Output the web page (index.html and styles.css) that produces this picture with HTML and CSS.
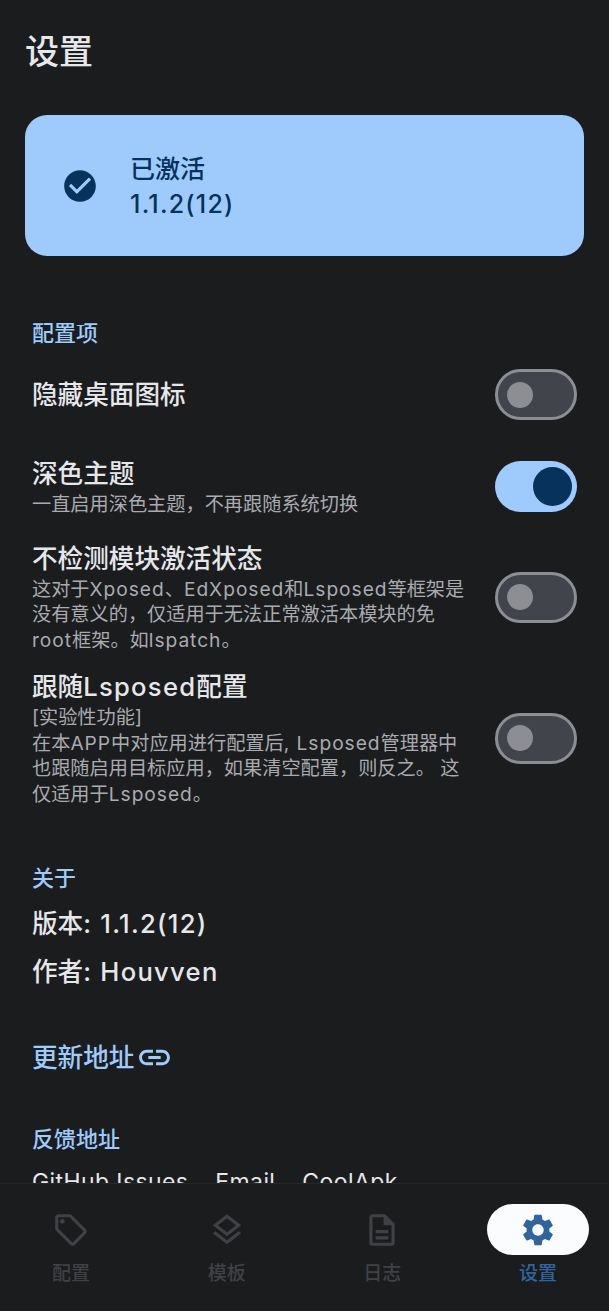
FILE: index.html
```html
<!DOCTYPE html>
<html lang="zh">
<head>
    <meta charset="UTF-8">
    <meta name="viewport" content="width=device-width, initial-scale=1.0">
    <title>设置</title>
    <link rel="stylesheet" href="styles.css">
</head>
<body>
    <div class="app">
        <main class="content">
            <h1 class="page-title">设置</h1>

            <!-- Status card -->
            <div class="status-card">
                <svg class="status-icon" viewBox="0 0 24 24"><path d="M12 2C6.48 2 2 6.48 2 12s4.48 10 10 10 10-4.48 10-10S17.52 2 12 2zm-2 15-5-5 1.41-1.41L10 14.17l7.59-7.59L19 8l-9 9z"/></svg>
                <div class="status-text">
                    <div>已激活</div>
                    <div class="lat">1.1.2(12)</div>
                </div>
            </div>

            <h2 class="section-title first">配置项</h2>

            <div class="setting one">
                <div class="setting-text"><div class="setting-name">隐藏桌面图标</div></div>
                <span class="switch"></span>
            </div>
            <div class="setting two">
                <div class="setting-text">
                    <div class="setting-name">深色主题</div>
                    <div class="setting-desc">一直启用深色主题，不再跟随系统切换</div>
                </div>
                <span class="switch on"></span>
            </div>
            <div class="setting three">
                <div class="setting-text">
                    <div class="setting-name">不检测模块激活状态</div>
                    <div class="setting-desc">这对于<span class="lat">Xposed</span>、<span class="lat">EdXposed</span>和<span class="lat">Lsposed</span>等框架是没有意义的，仅适用于无法正常激活本模块的免<span class="lat">root</span>框架。如<span class="lat">lspatch</span>。</div>
                </div>
                <span class="switch"></span>
            </div>
            <div class="setting four">
                <div class="setting-text">
                    <div class="setting-name">跟随<span class="lat">Lsposed</span>配置</div>
                    <div class="setting-desc">[实验性功能]<br>在本<span class="lat">APP</span>中对应用进行配置后<span class="lat">, Lsposed</span>管理器中也跟随启用目标应用，如果清空配置，则反之。 这仅适用于<span class="lat">Lsposed</span>。</div>
                </div>
                <span class="switch"></span>
            </div>

            <h2 class="section-title about">关于</h2>
            <div class="info-line">版本<span class="lat">: 1.1.2(12)</span></div>
            <div class="info-line">作者<span class="lat">: Houvven</span></div>

            <a class="update-link">更新地址
                <svg viewBox="0 0 24 24"><path d="M3.9 12c0-1.71 1.39-3.1 3.1-3.1h4V7H7c-2.76 0-5 2.24-5 5s2.24 5 5 5h4v-1.9H7c-1.71 0-3.1-1.39-3.1-3.1zM8 13h8v-2H8v2zm9-6h-4v1.9h4c1.71 0 3.1 1.39 3.1 3.1s-1.39 3.1-3.1 3.1h-4V17h4c2.76 0 5-2.24 5-5s-2.24-5-5-5z"/></svg>
            </a>

            <h2 class="section-title feedback">反馈地址</h2>
            <div class="feedback-links">
                <span>GitHub Issues</span>
                <span>Email</span>
                <span>CoolApk</span>
            </div>
        </main>

        <!-- Bottom navigation -->
        <nav class="bottom-nav">
            <div class="nav-item">
                <span class="nav-icon"><svg viewBox="0 0 24 24"><path d="m21.41 11.58-9-9C12.05 2.22 11.55 2 11 2H4c-1.1 0-2 .9-2 2v7c0 .55.22 1.05.59 1.42l9 9c.36.36.86.58 1.41.58s1.05-.22 1.41-.59l7-7c.37-.36.59-.86.59-1.41s-.23-1.06-.59-1.42zM13 20.01 4 11V4h7v-.01l9 9-7 7.02z"/><circle cx="6.5" cy="6.5" r="1.5"/></svg></span>
                <span class="nav-label">配置</span>
            </div>
            <div class="nav-item">
                <span class="nav-icon"><svg viewBox="0 0 24 24"><path d="m11.99 18.54-7.37-5.73L3 14.07l9 7 9-7-1.63-1.27zM12 16l7.36-5.73L21 9l-9-7-9 7 1.63 1.27L12 16zm0-11.47L17.74 9 12 13.47 6.26 9 12 4.53z"/></svg></span>
                <span class="nav-label">模板</span>
            </div>
            <div class="nav-item">
                <span class="nav-icon"><svg viewBox="0 0 24 24"><path d="M8 16h8v2H8zm0-4h8v2H8zm6-10H6c-1.1 0-2 .9-2 2v16c0 1.1.89 2 1.99 2H18c1.1 0 2-.9 2-2V8l-6-6zm4 18H6V4h7v5h5v11z"/></svg></span>
                <span class="nav-label">日志</span>
            </div>
            <div class="nav-item active">
                <span class="nav-icon"><svg viewBox="0 0 24 24"><path d="M19.14 12.94c.04-.3.06-.61.06-.94 0-.32-.02-.64-.07-.94l2.03-1.58c.18-.14.23-.41.12-.61l-1.92-3.32c-.12-.22-.37-.29-.59-.22l-2.39.96c-.5-.38-1.03-.7-1.62-.94l-.36-2.54c-.04-.24-.24-.41-.48-.41h-3.84c-.24 0-.43.17-.47.41l-.36 2.54c-.59.24-1.13.57-1.62.94l-2.39-.96c-.22-.08-.47 0-.59.22L2.74 8.87c-.12.21-.08.47.12.61l2.03 1.58c-.05.3-.09.63-.09.94s.02.64.07.94l-2.03 1.58c-.18.14-.23.41-.12.61l1.92 3.32c.12.22.37.29.59.22l2.39-.96c.5.38 1.03.7 1.62.94l.36 2.54c.05.24.24.41.48.41h3.84c.24 0 .44-.17.47-.41l.36-2.54c.59-.24 1.13-.56 1.62-.94l2.39.96c.22.08.47 0 .59-.22l1.92-3.32c.12-.22.07-.47-.12-.61l-2.01-1.58zM12 15.6c-1.98 0-3.6-1.62-3.6-3.6s1.62-3.6 3.6-3.6 3.6 1.62 3.6 3.6-1.62 3.6-3.6 3.6z"/></svg></span>
                <span class="nav-label">设置</span>
            </div>
        </nav>
    </div>
</body>
</html>
```

FILE: styles.css
```css
* {
    box-sizing: border-box;
}
html, body {
    margin: 0;
    height: 100%;
}
body {
    font-family: Inter, "Noto Sans CJK SC", sans-serif;
    background-color: #1b1c1e;
    color: #e6e7ea;
}
.lat {
    letter-spacing: 0.05em; /* latin runs in the reference are wider than Inter */
}
.app {
    height: 1311px;
    display: flex;
    flex-direction: column;
    overflow: hidden;
}
.content {
    height: 1183px;
    flex: none;
    overflow: hidden;
    padding: 0 25px;
}
.page-title {
    margin: 0;
    padding: 30px 0 0;
    font-size: 34px;
    line-height: 44px;
    font-weight: 500;
}

/* status card */
.status-card {
    margin-top: 41px;
    height: 141px;
    border-radius: 22px;
    background-color: #9ecbfc;
    color: #07325b;
    display: flex;
    align-items: center;
    padding-left: 36px;
}
.status-icon {
    width: 38px;
    height: 38px;
    fill: #07325b;
    flex: none;
}
.status-text {
    margin-left: 31px;
    padding-top: 3px;
    font-size: 25px;
    line-height: 35px;
    font-weight: 500;
}

.section-title {
    margin: 0;
    padding-left: 7px;
    font-size: 22px;
    line-height: 30px;
    font-weight: 500;
    color: #9ecbfc;
}
.section-title.first {
    margin-top: 62px;
}
.section-title.about {
    margin-top: 55px;
}
.section-title.feedback {
    margin-top: 49px;
}

/* settings rows */
.setting {
    display: flex;
    align-items: center;
    justify-content: space-between;
    padding: 0 7px;
}
.setting.one {
    margin-top: 21px;
}
.setting.two {
    margin-top: 36px;
}
.setting.three {
    margin-top: 23px;
}
.setting.four {
    margin-top: 15px;
}
.setting-text {
    width: 436px;
}
.setting-name {
    font-size: 25.6px;
    line-height: 36px;
    font-weight: 500;
}
.setting-desc {
    font-size: 19.2px;
    line-height: 25.7px;
    color: #a9abb0;
}
.switch {
    flex: none;
    width: 82px;
    height: 51px;
    border-radius: 26px;
    border: 3px solid #8c8e94;
    background-color: #42444c;
    display: flex;
    align-items: center;
    padding-left: 9px;
}
.switch::after {
    content: "";
    width: 26px;
    height: 26px;
    border-radius: 50%;
    background-color: #8c8e94;
}
.switch.on {
    border: none;
    background-color: #9ecbfc;
    justify-content: flex-end;
    padding: 0 5px 0 0;
}
.switch.on::after {
    width: 39px;
    height: 39px;
    background-color: #07325b;
}

.about + .info-line {
    margin-top: 7px;
}
.info-line {
    padding-left: 7px;
    font-size: 25.6px;
    line-height: 48px;
    font-weight: 500;
}
.update-link {
    display: flex;
    align-items: center;
    gap: 2px;
    margin-top: 45px;
    padding-left: 7px;
    font-size: 25.6px;
    line-height: 34px;
    font-weight: 500;
    color: #9ecbfc;
}
.update-link svg {
    width: 37px;
    height: 37px;
    margin: -2px 0;
    fill: #9ecbfc;
}
.feedback-links {
    display: flex;
    gap: 27px;
    margin-top: 13px;
    padding-left: 7px;
    font-size: 23px;
    line-height: 30px;
    letter-spacing: 0.4px;
}

/* bottom nav */
.bottom-nav {
    flex: 1;
    display: flex;
    justify-content: space-between;
    padding: 20px 20px 0;
    border-top: 1px solid #26272a;
    background-color: #1b1c1e;
}
.nav-item {
    width: 102px;
    display: flex;
    flex-direction: column;
    align-items: center;
    color: #404145;
}
.nav-icon {
    width: 102px;
    height: 51px;
    border-radius: 26px;
    display: flex;
    align-items: center;
    justify-content: center;
}
.nav-icon svg {
    width: 38px;
    height: 38px;
    fill: #404145;
}
.nav-label {
    margin-top: 5px;
    font-size: 19px;
    line-height: 28px;
    font-weight: 500;
}
.nav-item.active {
    color: #2f659e;
}
.nav-item.active .nav-icon {
    background-color: #fbfcfd;
}
.nav-item.active .nav-icon svg {
    fill: #2f659e;
}
```
